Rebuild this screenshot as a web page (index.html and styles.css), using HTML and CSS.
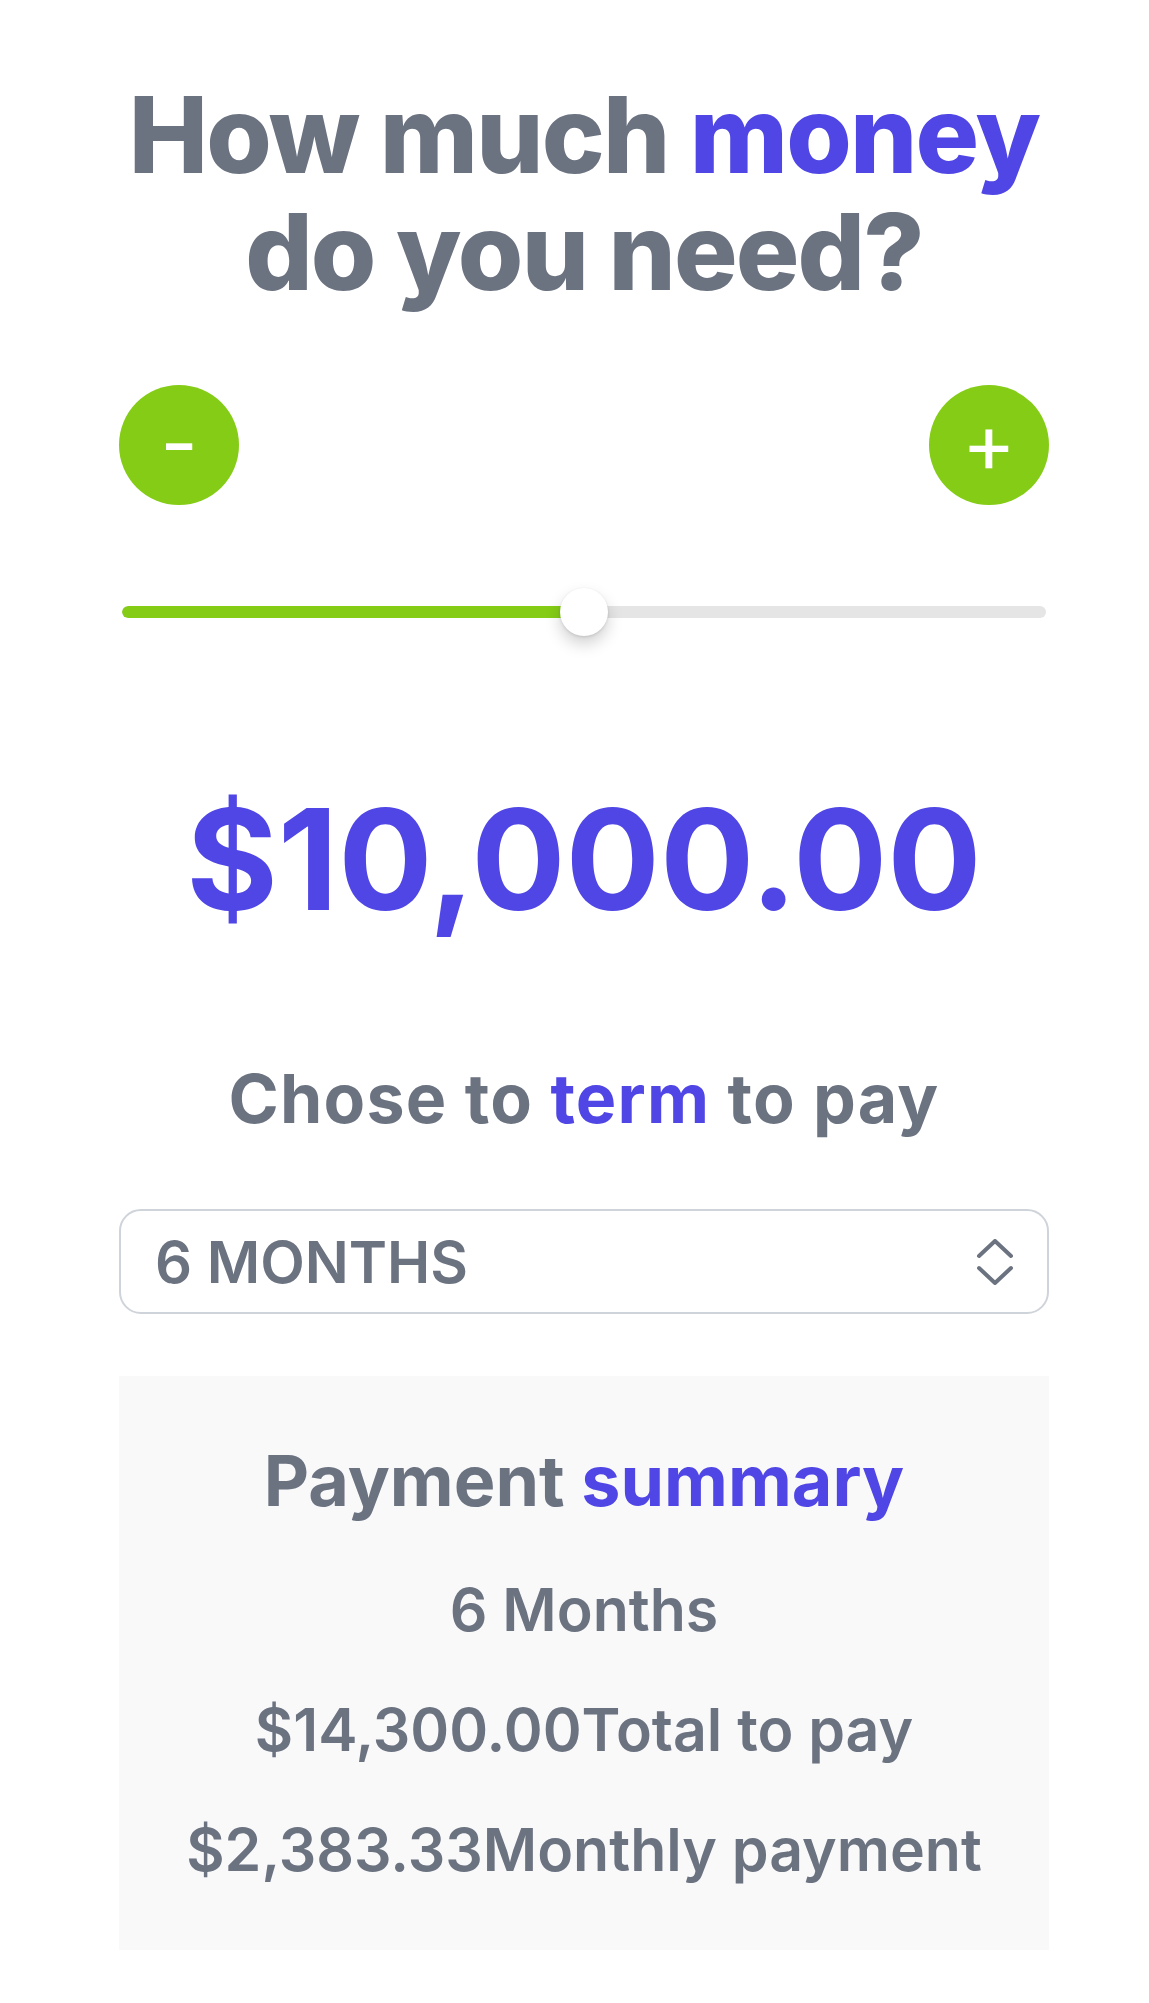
FILE: index.html
```html
<!DOCTYPE html>
<html lang="en">
<head>
<meta charset="utf-8">
<title>Loan calculator</title>
<link rel="stylesheet" href="styles.css">
</head>
<body>
<main class="calc">
  <h1 class="title">How much <span class="accent">money</span><br>do you need?</h1>

  <div class="steppers">
    <button class="step">-</button>
    <button class="step">+</button>
  </div>

  <div class="slider">
    <div class="track">
      <div class="fill" style="width:50%"></div>
    </div>
    <div class="thumb" style="left:50%"></div>
  </div>

  <div class="amount">$10,000.00</div>

  <h2 class="subtitle">Chose to <span class="accent">term</span> to pay</h2>

  <div class="select">
    <span class="select-value">6 MONTHS</span>
    <svg class="select-icon" width="40" height="46" viewBox="0 0 40 46" fill="none" stroke="#6b7280" stroke-width="4" stroke-linecap="round" stroke-linejoin="round">
      <polyline points="4,17 20,2 36,17"/>
      <polyline points="4,29 20,44 36,29"/>
    </svg>
  </div>

  <section class="summary">
    <h3 class="summary-title">Payment <span class="accent">summary</span></h3>
    <p class="summary-line">6 Months</p>
    <p class="summary-line">$14,300.00Total to pay</p>
    <p class="summary-line">$2,383.33Monthly payment</p>
  </section>
</main>
</body>
</html>
```

FILE: styles.css
```css
* { box-sizing: border-box; }

html, body {
  margin: 0;
  padding: 0;
  background: #ffffff;
}

body {
  font-family: Inter, "Noto Sans", "Liberation Sans", sans-serif;
  color: #6b7280;
}

.calc {
  width: 930px;
  margin: 0 100px 0 119px;
  display: flex;
  flex-direction: column;
  padding-bottom: 53px;
}

.accent { color: #4f46e5; }

.title {
  margin: 76px 0 0;
  text-align: center;
  font-size: 106px;
  line-height: 117px;
  font-weight: 800;
  letter-spacing: -1.85px;
}

.steppers {
  margin-top: 75px;
  display: flex;
  justify-content: space-between;
}

.step {
  width: 120px;
  height: 120px;
  border-radius: 50%;
  border: none;
  background: #84cc16;
  color: #ffffff;
  font-family: Inter, "Noto Sans", sans-serif;
  font-size: 82px;
  font-weight: 400;
  line-height: 1;
  padding: 0 0 4px;
  display: flex;
  align-items: center;
  justify-content: center;
}

.slider {
  position: relative;
  margin: 83px 3px 0;
  height: 48px;
  display: flex;
  align-items: center;
}

.track {
  width: 100%;
  height: 12px;
  border-radius: 6px;
  background: #e5e5e5;
  overflow: hidden;
}

.fill {
  height: 100%;
  background: #84cc16;
  border-radius: 6px 0 0 6px;
}

.thumb {
  position: absolute;
  top: 0;
  width: 48px;
  height: 48px;
  margin-left: -24px;
  border-radius: 50%;
  background: #ffffff;
  box-shadow: 0 8px 16px rgba(0, 0, 0, 0.18), 0 1px 3px rgba(0, 0, 0, 0.12);
}

.amount {
  margin-top: 153px;
  text-align: center;
  font-size: 140px;
  line-height: 140px;
  font-weight: 700;
  color: #4f46e5;
  letter-spacing: 0;
}

.subtitle {
  margin: 135px 0 0;
  text-align: center;
  font-size: 68px;
  line-height: 68px;
  font-weight: 700;
  letter-spacing: 1.2px;
}

.select {
  margin-top: 77px;
  height: 105px;
  border: 2px solid #cfd3da;
  border-radius: 22px;
  display: flex;
  align-items: center;
  justify-content: space-between;
  padding: 0 32px 0 34px;
}

.select-value {
  font-size: 58px;
  font-weight: 600;
  letter-spacing: 0;
}

.summary {
  margin-top: 62px;
  background: #f9f9fa;
  padding: 70px 0 40px;
  text-align: center;
}

.summary-title {
  margin: 0 0 34px;
  font-size: 70px;
  line-height: 70px;
  font-weight: 700;
  letter-spacing: 0;
}

.summary-line {
  margin: 0;
  font-size: 59px;
  line-height: 120px;
  font-weight: 600;
  letter-spacing: 0;
}
```
